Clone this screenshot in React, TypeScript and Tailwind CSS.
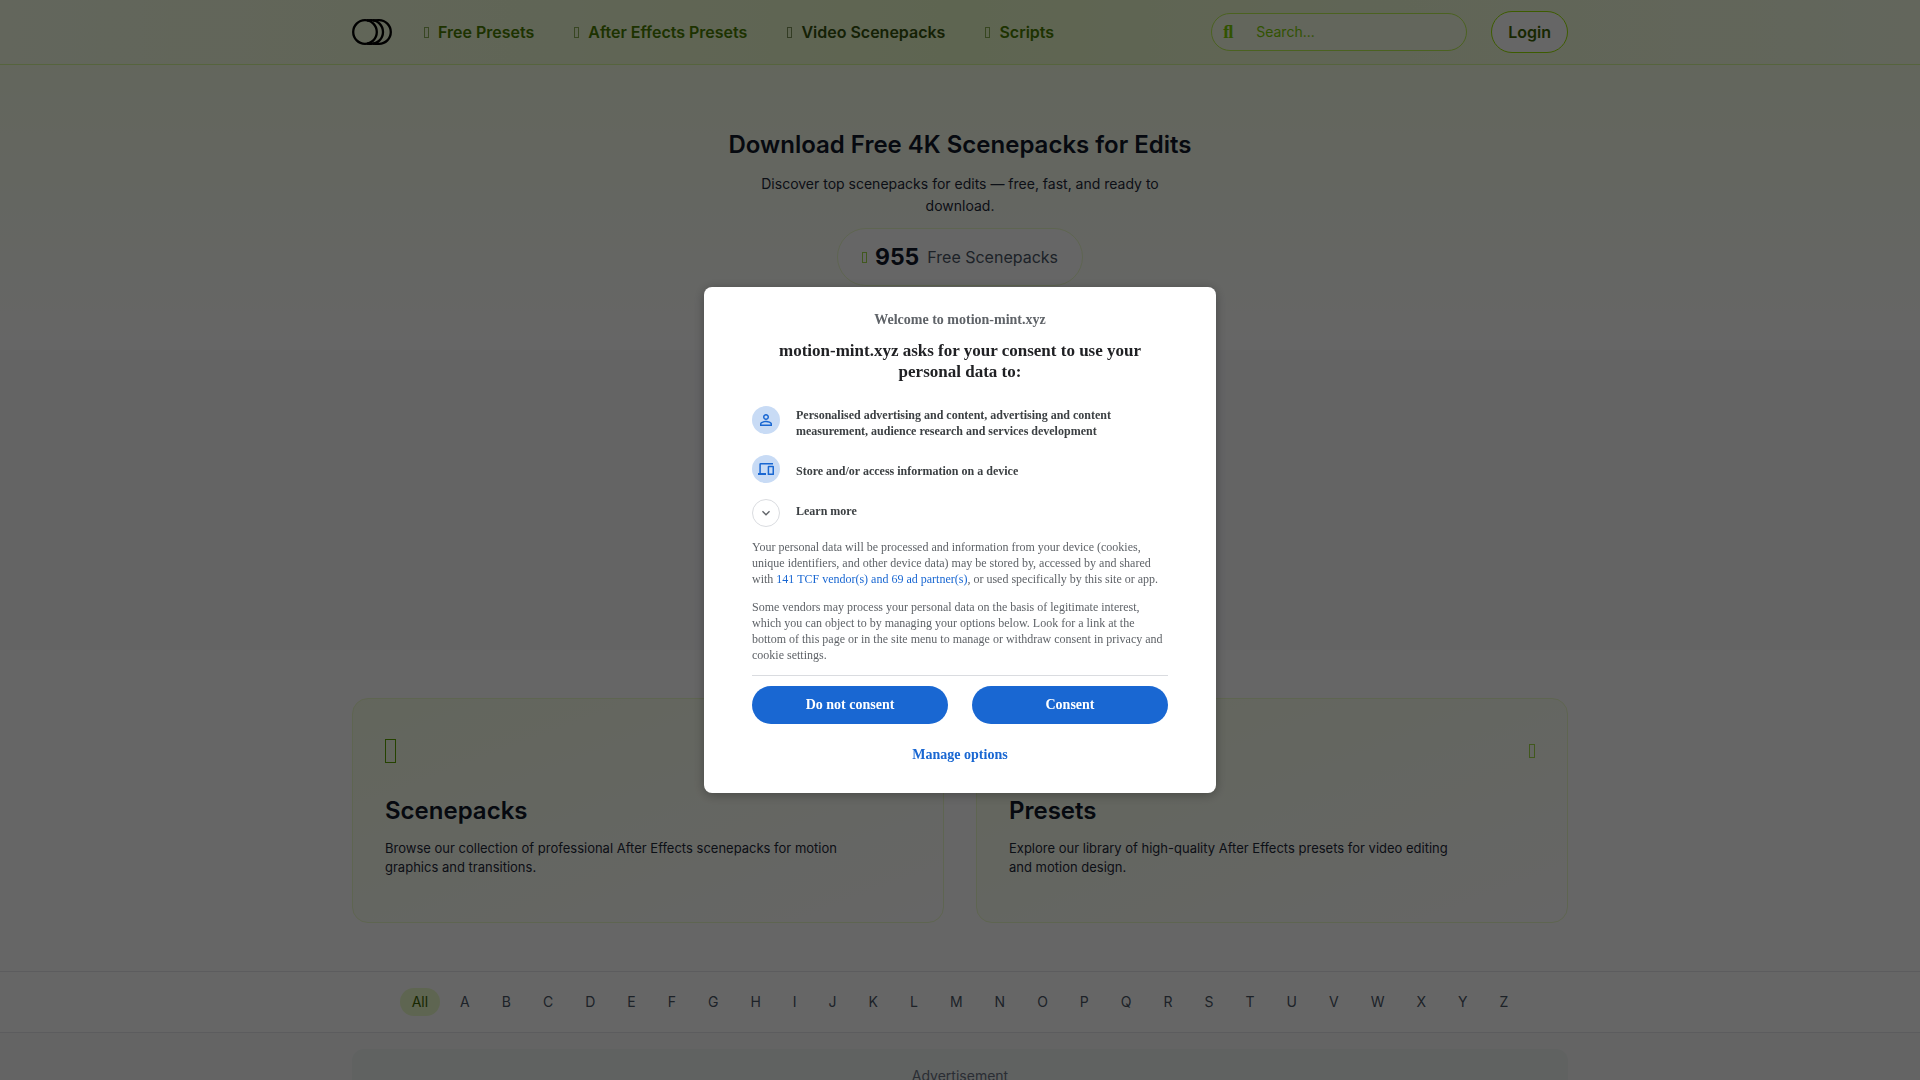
import { useState } from "react";
import { MdExpandMore, MdPersonOutline } from "react-icons/md";

type NavItem = {
  label: string;
  active?: boolean;
};

type Category = {
  title: string;
  description: string;
};

const NAV_ITEMS: NavItem[] = [
  { label: "Free Presets" },
  { label: "After Effects Presets" },
  { label: "Video Scenepacks", active: true },
  { label: "Scripts" },
];

const CATEGORIES: Category[] = [
  {
    title: "Scenepacks",
    description:
      "Browse our collection of professional After Effects scenepacks for motion graphics and transitions.",
  },
  {
    title: "Presets",
    description:
      "Explore our library of high-quality After Effects presets for video editing and motion design.",
  },
];

const LETTERS = ["All", ..."ABCDEFGHIJKLMNOPQRSTUVWXYZ"];

// Thin upright box used as the icon mark across the site
function BoxIcon({ className }: { className: string }) {
  return <span aria-hidden="true" className={`shrink-0 border ${className}`} />;
}

function Logo() {
  return (
    <svg viewBox="0 0 40 26" className="h-[26px] w-10" fill="none" stroke="#000" strokeWidth="2.3">
      <circle cx="13" cy="13" r="11.8" />
      <path d="M15 1.5c1.300-.2 2.700-.3 4.200-.3a11.800 11.800 0 0 1 0 23.600c-1.500 0-2.900-.1-4.200-.3" />
      <path d="M21 1.500c1.500-.2 3.500-.3 6-.3a11.800 11.800 0 0 1 0 23.600c-2.500 0-4.500-.1-6-.3" />
    </svg>
  );
}

function DevicesIcon() {
  return (
    <svg viewBox="0 0 48 37" className="w-4" fill="currentColor" fillRule="evenodd">
      <path d="M4 4a4 4 0 0 1 4-4h37v4.500H8.500V30H24v7H0v-7h4z" />
      <path d="M32 8h13a3 3 0 0 1 3 3v23a3 3 0 0 1-3 3H32a3 3 0 0 1-3-3V11a3 3 0 0 1 3-3zm1.500 5v18.500h10V13z" />
    </svg>
  );
}

function Header() {
  return (
    <header className="border-b border-lime-200 bg-gradient-to-r from-lime-50 via-lime-100 to-lime-50">
      <div className="mx-auto flex h-16 max-w-7xl items-center justify-between px-8">
        <div className="flex items-center gap-8">
          <a href="#" aria-label="Home">
            <Logo />
          </a>
          <nav className="flex items-center gap-10">
            {NAV_ITEMS.map((item) => (
              <a
                key={item.label}
                href="#"
                className={`flex items-center gap-[9px] font-semibold ${
                  item.active ? "text-lime-900" : "text-lime-700"
                }`}
              >
                <BoxIcon className="h-[11px] w-[5px] opacity-60" />
                {item.label}
              </a>
            ))}
          </nav>
        </div>
        <div className="flex items-center gap-6">
          <label className="flex w-64 items-center rounded-full border border-lime-300 bg-lime-50 py-2 pr-4 pl-[11px] text-sm">
            <span
              aria-hidden="true"
              className="w-[33px] shrink-0 font-['Liberation_Serif',serif] text-lg leading-5 font-bold text-lime-500"
            >
              ﬂ
            </span>
            <input
              type="search"
              aria-label="Search"
              placeholder="Search..."
              className="w-full min-w-0 leading-5 outline-none placeholder:text-lime-500"
            />
          </label>
          <button className="rounded-full border border-lime-400 bg-white px-4 py-2 font-semibold text-lime-800">
            Login
          </button>
        </div>
      </div>
    </header>
  );
}

function Hero() {
  return (
    <section className="flex flex-col items-center bg-gradient-to-b from-lime-50 to-white py-16 text-center">
      <h1 className="text-2xl font-semibold text-gray-900">Download Free 4K Scenepacks for Edits</h1>
      <p className="mt-3 max-w-md text-sm leading-[22px] text-gray-800">
        Discover top scenepacks for edits — free, fast, and ready to download.
      </p>
      <div className="mt-[11px] flex items-center gap-2 rounded-full border border-lime-100 bg-white px-6 py-3">
        <BoxIcon className="h-[11px] w-[5px] text-lime-500 opacity-70" />
        <span className="text-[23px] leading-8 font-bold text-gray-900">955</span>
        <span className="text-gray-600">Free Scenepacks</span>
      </div>
    </section>
  );
}

function CategoryCard({ category }: { category: Category }) {
  return (
    <a
      href="#"
      className="rounded-2xl border border-lime-100 bg-gradient-to-br from-lime-50 to-white px-8 pt-8 pb-[45px]"
    >
      <div className="mb-6 flex h-10 items-center justify-between">
        <BoxIcon className="h-6 w-[11px] text-lime-600" />
        <BoxIcon className="h-[14px] w-[6px] text-lime-500 opacity-70" />
      </div>
      <h2 className="text-2xl font-semibold text-gray-900">{category.title}</h2>
      <p className="mt-3 max-w-[460px] text-[13px] leading-[19px] text-gray-800">
        {category.description}
      </p>
    </a>
  );
}

function LetterFilter() {
  const [letter, setLetter] = useState("All");

  return (
    <section className="border-y border-gray-200 bg-white py-4">
      <div className="flex flex-wrap justify-center gap-2">
        {LETTERS.map((item) => (
          <button
            key={item}
            onClick={() => setLetter(item)}
            className={`rounded-full px-3 py-1 text-sm ${
              item === letter ? "bg-lime-100 text-lime-800" : "text-gray-600"
            }`}
          >
            {item}
          </button>
        ))}
      </div>
    </section>
  );
}

function ConsentDialog({ onClose }: { onClose: () => void }) {
  const roundIcon = "flex size-7 shrink-0 items-center justify-center rounded-full";
  const pillButton = "flex-1 rounded-full bg-[#1967d2] py-[9px] text-sm font-bold text-white";

  return (
    <div className="fixed inset-0 flex items-center justify-center bg-black/60 font-['Liberation_Serif',serif]">
      <div
        role="dialog"
        aria-modal="true"
        aria-labelledby="consent-title"
        className="w-full max-w-lg rounded-lg bg-white px-12 pt-[25px] pb-[19px] text-xs leading-4 text-[#5f6368] shadow-[0_2px_12px_rgba(0,0,0,0.3)]"
      >
        <p className="text-center text-sm leading-4 font-bold">Welcome to motion-mint.xyz</p>
        <h2
          id="consent-title"
          className="mt-3 px-4 text-center text-[17px] leading-[21px] font-bold text-[#202124]"
        >
          motion-mint.xyz asks for your consent to use your personal data to:
        </h2>

        <ul className="mt-6 font-bold text-[#3c4043]">
          <li className="flex gap-4">
            <span className={`${roundIcon} bg-[#c8dbf5] text-[#1967d2]`}>
              <MdPersonOutline size={18} />
            </span>
            <span className="pt-px">
              Personalised advertising and content, advertising and content measurement, audience
              research and services development
            </span>
          </li>
          <li className="mt-4 flex gap-4">
            <span className={`${roundIcon} bg-[#c8dbf5] text-[#1967d2]`}>
              <DevicesIcon />
            </span>
            <span className="pt-2">Store and/or access information on a device</span>
          </li>
          <li className="mt-4">
            <button className="flex gap-4 text-left font-bold">
              <span className={`${roundIcon} border border-[#dadce0] text-[#5f6368]`}>
                <MdExpandMore size={16} />
              </span>
              <span className="pt-1">Learn more</span>
            </button>
          </li>
        </ul>

        <p className="mt-3">
          Your personal data will be processed and information from your device (cookies, unique
          identifiers, and other device data) may be stored by, accessed by and shared with{" "}
          <a href="#" className="text-[#1967d2]">
            141 TCF vendor(s) and 69 ad partner(s)
          </a>
          , or used specifically by this site or app.
        </p>
        <p className="mt-3">
          Some vendors may process your personal data on the basis of legitimate interest, which you
          can object to by managing your options below. Look for a link at the bottom of this page or
          in the site menu to manage or withdraw consent in privacy and cookie settings.
        </p>

        <div className="mt-3 flex gap-6 border-t border-[#dadce0] pt-[10px]">
          <button onClick={onClose} className={pillButton}>
            Do not consent
          </button>
          <button onClick={onClose} className={pillButton}>
            Consent
          </button>
        </div>
        <button className="mt-3 w-full py-[9px] text-sm font-bold text-[#1967d2]">
          Manage options
        </button>
      </div>
    </div>
  );
}

export default function App() {
  const [consentOpen, setConsentOpen] = useState(true);

  return (
    <div
      className={`bg-gray-50 font-[Inter,sans-serif] text-gray-900 ${
        consentOpen ? "h-screen overflow-hidden" : "min-h-screen"
      }`}
    >
      <Header />
      <main>
        <Hero />
        <div className="h-[300px] bg-gray-50" />
        <section className="bg-white py-12">
          <div className="mx-auto grid max-w-7xl grid-cols-2 gap-8 px-8">
            {CATEGORIES.map((category) => (
              <CategoryCard key={category.title} category={category} />
            ))}
          </div>
        </section>
        <LetterFilter />
        <section className="mx-auto max-w-7xl px-8 py-4">
          <div className="min-h-28 rounded-xl bg-[#f0f5f3] p-4 text-center text-sm leading-[22px] text-gray-500">
            Advertisement
          </div>
        </section>
      </main>
      {consentOpen ? <ConsentDialog onClose={() => setConsentOpen(false)} /> : null}
    </div>
  );
}
